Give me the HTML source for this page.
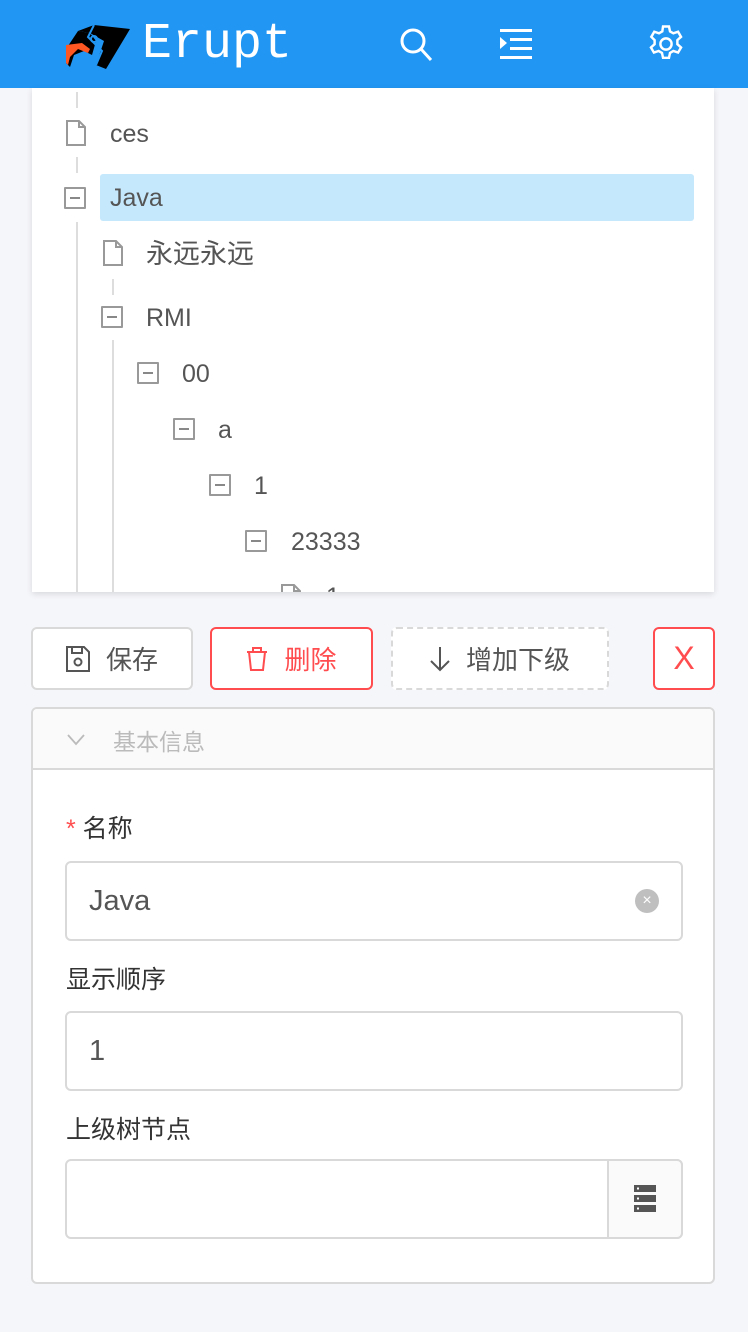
<!DOCTYPE html>
<html><head><meta charset="utf-8"><style>
*{box-sizing:border-box;margin:0;padding:0}
body{width:748px;height:1332px;background:#f5f6fa;font-family:"Liberation Sans","Noto Sans CJK SC",sans-serif;color:#555;position:relative;overflow:hidden}
.a{position:absolute}
.hd{left:0;top:0;width:748px;height:88px;background:#2196f3}
.card{left:32px;top:88px;width:682px;height:504px;background:#fff;box-shadow:0 2px 6px rgba(0,0,0,.12);overflow:hidden}
.t{font-size:25px;color:#555;line-height:30px}
.box{width:22px;height:22px;border:2px solid #999;border-radius:1px}
.box:after{content:"";position:absolute;left:4px;top:8px;width:10px;height:2px;background:#888}
.vl{width:2px;background:#ddd}
.btn{height:63px;border:2px solid #d9d9d9;border-radius:6px;background:#fff;font-size:26px;display:flex;align-items:center;justify-content:center;gap:16px}
.lbl{font-size:25px;color:#333}
.inp{border:2px solid #d9d9d9;border-radius:6px;background:#fff;font-size:29px;color:#555;padding-left:22px;display:flex;align-items:center}
</style></head><body>
<div class="a hd">
<svg class="a" style="left:66px;top:25px" width="64" height="44" viewBox="0 0 64 44">
<polygon points="12,6 28,0 64,4 40,44 30,40 38,16 24,8" fill="#000"/>
<polygon points="0,24 12,6 24,8 30,16 26,30 18,26 8,30 4,42 0,38" fill="#000"/>
<path d="M0,20 L16,18 L24,24 L22,28 L12,24 L4,32 L2,40 L0,38Z" fill="#ff5722"/>
<path d="M28,0 L22,12 L36,26 L30,40" stroke="#2196f3" stroke-width="2" fill="none"/>
<circle cx="28" cy="14" r="3" fill="none" stroke="#2196f3" stroke-width="2"/>
</svg>
<div class="a" style="left:142px;top:17px;font-family:'Liberation Mono',monospace;font-size:50px;color:#fff;line-height:56px">Erupt</div>
<svg class="a" style="left:398px;top:26px" width="36" height="36" viewBox="0 0 36 36" fill="none" stroke="#fff" stroke-width="3"><circle cx="15" cy="15" r="11"/><path d="M23 23L33 34"/></svg>
<svg class="a" style="left:498px;top:28px" width="36" height="32" viewBox="0 0 36 32" fill="#fff"><rect x="2" y="1" width="32" height="3"/><rect x="12" y="10" width="22" height="3"/><rect x="12" y="19" width="22" height="3"/><rect x="2" y="28" width="32" height="3"/><polygon points="2,9 9,15 2,21"/></svg>
<svg class="a" style="left:645px;top:23px" width="42" height="42" viewBox="0 0 24 24" fill="none" stroke="#fff" stroke-width="1.4"><circle cx="12" cy="12" r="3.2"/><path d="M10.3 2h3.4l.6 2.8 1.9 1.1 2.7-.9 1.7 2.9-2.1 1.9v2.3l2.1 1.9-1.7 2.9-2.7-.9-1.9 1.1-.6 2.8h-3.4l-.6-2.8-1.9-1.1-2.7.9-1.7-2.9 2.1-1.900v-2.3L3.6 7.9l1.7-2.9 2.7.9 1.9-1.1z"/></svg>
</div>
<div class="a card">
<div class="a vl" style="left:44px;top:4px;height:16px"></div>
<div class="a vl" style="left:44px;top:69px;height:16px"></div>
<div class="a vl" style="left:44px;top:134px;height:380px"></div>
<div class="a vl" style="left:80px;top:191px;height:16px"></div>
<div class="a vl" style="left:80px;top:252px;height:260px"></div>
<svg class="a" style="left:34px;top:32px" width="20" height="26" viewBox="0 0 20 26" fill="none" stroke="#999" stroke-width="2"><path d="M1 1h12l6 6v18H1z M13 1v6h6"/></svg>
<div class="a t" style="left:78px;top:31px">ces</div>
<div class="a" style="left:68px;top:86px;width:594px;height:47px;background:#c5e8fc;border-radius:3px"></div>
<div class="a box" style="left:32px;top:99px"></div>
<div class="a t" style="left:78px;top:95px">Java</div>
<svg class="a" style="left:71px;top:152px" width="20" height="26" viewBox="0 0 20 26" fill="none" stroke="#999" stroke-width="2"><path d="M1 1h12l6 6v18H1z M13 1v6h6"/></svg>
<div class="a t" style="left:114px;top:151px;font-size:27px">永远永远</div>
<div class="a box" style="left:69px;top:218px"></div>
<div class="a t" style="left:114px;top:215px">RMI</div>
<div class="a box" style="left:105px;top:274px"></div>
<div class="a t" style="left:150px;top:271px">00</div>
<div class="a box" style="left:141px;top:330px"></div>
<div class="a t" style="left:186px;top:327px">a</div>
<div class="a box" style="left:177px;top:386px"></div>
<div class="a t" style="left:222px;top:383px">1</div>
<div class="a box" style="left:213px;top:442px"></div>
<div class="a t" style="left:259px;top:439px">23333</div>
<svg class="a" style="left:249px;top:496px" width="20" height="26" viewBox="0 0 20 26" fill="none" stroke="#999" stroke-width="2"><path d="M1 1h12l6 6v18H1z M13 1v6h6"/></svg>
<div class="a t" style="left:294px;top:494px">1</div>
</div>
<div class="a btn" style="left:31px;top:627px;width:162px;color:#555"><svg width="24" height="26" viewBox="0 0 24 26" fill="none" stroke="#555" stroke-width="2"><path d="M1 1h17l5 5v19H1z M6 1v6h10V1"/><circle cx="12" cy="16" r="3.5"/></svg>保存</div>
<div class="a btn" style="left:210px;top:627px;width:163px;border-color:#ff4d4f;color:#ff4d4f"><svg width="22" height="24" viewBox="0 0 22 24" fill="none" stroke="#ff4d4f" stroke-width="2"><path d="M1 5h20 M7 5V1h8v4 M3 5l2 18h12l2-18"/></svg>删除</div>
<div class="a btn" style="left:391px;top:627px;width:218px;border-style:dashed;color:#555"><svg width="20" height="26" viewBox="0 0 20 26" fill="none" stroke="#555" stroke-width="2"><path d="M10 1v23 M1 15l9 9 9-9"/></svg>增加下级</div>
<div class="a btn" style="left:653px;top:627px;width:62px;border-color:#ff4d4f;color:#ff4d4f;font-size:32px">X</div>
<div class="a" style="left:31px;top:707px;width:684px;height:577px;background:#fff;border:2px solid #d9d9d9;border-radius:6px;overflow:hidden">
<div class="a" style="left:0;top:0;width:680px;height:61px;background:#fafafa;border-bottom:2px solid #d9d9d9"></div>
<svg class="a" style="left:34px;top:25px" width="18" height="12" viewBox="0 0 18 12" fill="none" stroke="#bbb" stroke-width="1.8"><path d="M1 1l8 9 8-9"/></svg>
<div class="a" style="left:80px;top:14px;font-size:23px;color:#bbb">基本信息</div>
<div class="a lbl" style="left:33px;top:100px"><span style="color:#ff4d4f">*</span>&nbsp;名称</div>
<div class="a inp" style="left:32px;top:152px;width:618px;height:80px">Java</div>
<div class="a" style="left:602px;top:180px;width:24px;height:24px;border-radius:50%;background:#bfbfbf;color:#fff;font-size:16px;text-align:center;line-height:24px">×</div>
<div class="a lbl" style="left:33px;top:251px">显示顺序</div>
<div class="a inp" style="left:32px;top:302px;width:618px;height:80px">1</div>
<div class="a lbl" style="left:33px;top:401px">上级树节点</div>
<div class="a inp" style="left:32px;top:450px;width:618px;height:80px"></div>
<div class="a" style="left:574px;top:450px;width:76px;height:80px;background:#fafafa;border:2px solid #d9d9d9;border-radius:0 6px 6px 0"></div>
<svg class="a" style="left:601px;top:476px" width="22" height="28" viewBox="0 0 22 28"><rect y="0" width="22" height="7" fill="#555"/><rect y="10" width="22" height="7" fill="#555"/><rect y="20" width="22" height="7" fill="#555"/><rect x="3" y="2.5" width="2" height="2" fill="#fff"/><rect x="3" y="12.5" width="2" height="2" fill="#fff"/><rect x="3" y="22.5" width="2" height="2" fill="#fff"/></svg>
</div>
</body></html>
